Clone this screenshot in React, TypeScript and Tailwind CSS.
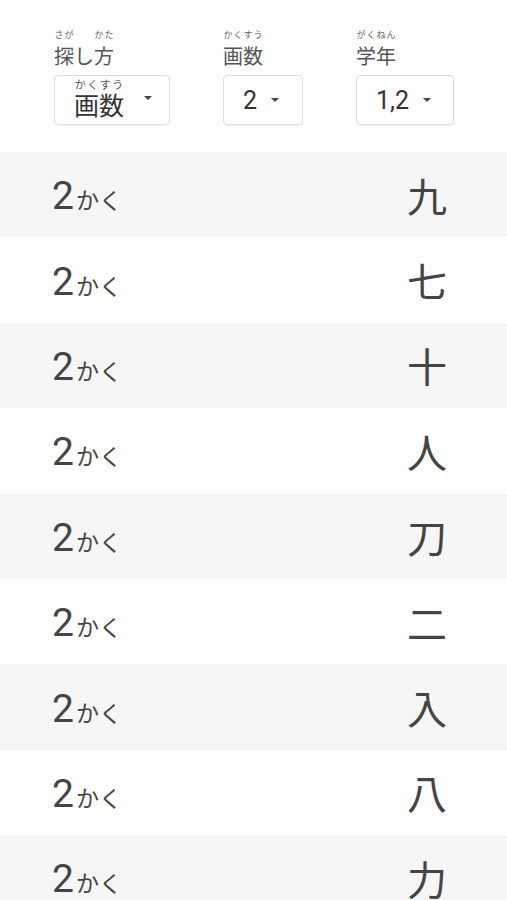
import React from 'react';

const kanji = ['九', '七', '十', '人', '刀', '二', '入', '八', '力'];

const Caret = () => (
  <span className="inline-block w-0 h-0 border-l-[4px] border-r-[4px] border-t-[4px] border-l-transparent border-r-transparent border-t-[#444]" />
);

const Ruby: React.FC<{ base: string; rt: string }> = ({ base, rt }) => (
  <ruby className="[ruby-position:over]">
    {base}
    <rt className="text-[9px] leading-[10px] text-[#666] pb-[5px]">{rt}</rt>
  </ruby>
);

export default function App() {
  return (
    <div
      className="w-[507px] h-[900px] overflow-hidden bg-white text-[#444]"
      style={{ fontFamily: '"Noto Sans CJK JP", "Noto Sans", sans-serif' }}
    >
      {/* Filter header */}
      <div className="h-[152px] relative">
        <div className="absolute left-[54px] top-[28px] text-[20px] leading-[26px] text-[#555]">
          <Ruby base="探" rt="さが" />し<Ruby base="方" rt="かた" />
        </div>
        <div className="absolute left-[223px] top-[28px] text-[20px] leading-[26px] text-[#555]">
          <Ruby base="画数" rt="かくすう" />
        </div>
        <div className="absolute left-[356px] top-[28px] text-[20px] leading-[26px] text-[#555]">
          <Ruby base="学年" rt="がくねん" />
        </div>

        <div className="absolute left-[54px] top-[75px] w-[116px] h-[50px] border border-[#ddd] rounded-[4px] shadow-[0_1px_1px_rgba(0,0,0,0.05)]">
          <div className="absolute left-[19px] top-[0px] text-[25px] leading-[34px] text-[#333]">
            <ruby>
              画数
              <rt className="text-[11px] leading-[12px] text-[#555] pb-[1px]">かくすう</rt>
            </ruby>
          </div>
          <div className="absolute left-[89px] top-[20px] flex"><Caret /></div>
        </div>

        <div className="absolute left-[223px] top-[75px] w-[80px] h-[50px] border border-[#ddd] rounded-[4px] shadow-[0_1px_1px_rgba(0,0,0,0.05)] flex items-center pl-[19px] gap-[14px]">
          <span className="text-[25px] leading-none text-[#333]" style={{ fontFamily: 'Roboto, sans-serif' }}>2</span>
          <Caret />
        </div>

        <div className="absolute left-[356px] top-[75px] w-[98px] h-[50px] border border-[#ddd] rounded-[4px] shadow-[0_1px_1px_rgba(0,0,0,0.05)] flex items-center pl-[19px] gap-[14px]">
          <span className="text-[25px] leading-none text-[#333]" style={{ fontFamily: 'Roboto, sans-serif' }}>1,2</span>
          <Caret />
        </div>
      </div>

      {/* Kanji list */}
      <div className="flex flex-col">
        {kanji.map((k, i) => (
          <div
            key={k}
            className={`h-[85.4px] shrink-0 flex items-center justify-between pl-[52px] pr-[60px] ${
              i % 2 === 0 ? 'bg-[#f6f6f6]' : 'bg-white'
            }`}
          >
            <div className="flex items-baseline pt-[4px]">
              <span className="text-[39px] leading-none text-[#444]" style={{ fontFamily: 'Roboto, sans-serif' }}>2</span>
              <span className="text-[23px] leading-none text-[#444] ml-[2px]">かく</span>
            </div>
            <span className="text-[40px] leading-none text-[#444]">{k}</span>
          </div>
        ))}
      </div>
    </div>
  );
}
